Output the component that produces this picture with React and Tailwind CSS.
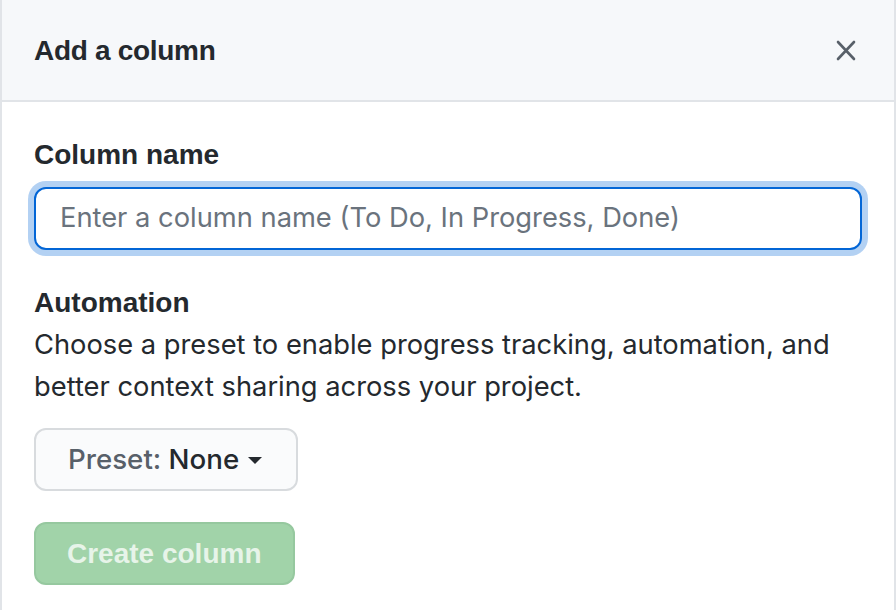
export default function App() {
  return (
    <div className="w-[896px] h-[610px] overflow-hidden bg-white font-['Liberation_Sans',Arial,sans-serif] text-[#24292e]">
      <div className="h-full border-x-2 border-[#e1e4e8]">
        <div className="h-[102px] bg-[#f6f8fa] border-b-2 border-[#e1e4e8] flex items-center justify-between pl-[32px] pr-[36px]">
          <h2 className="text-[28px] leading-[42px] font-bold tracking-[-0.3px] pt-[2px]">Add a column</h2>
          <svg width="24" height="24" viewBox="0 0 24 24" className="mt-[1px]">
            <path d="M4 3 L20 20 M20 3 L4 20" stroke="#586069" strokeWidth="2.6" strokeLinecap="round" fill="none" />
          </svg>
        </div>
        <div className="pl-[32px] pr-[32px] pt-[32px]">
          <div className="text-[28px] leading-[42px] font-bold">Column name</div>
          <div className="mt-[11px] w-[828px] h-[63px] rounded-[12px] border-2 border-[#0366d6] shadow-[0_0_0_6px_rgba(3,102,214,0.3)] flex items-center pl-[24px] text-[27.3px] text-[#6a737d] bg-white font-['Inter',sans-serif]">
            Enter a column name (To Do, In Progress, Done)
          </div>
          <div className="mt-[32px] text-[28px] leading-[42px] font-bold">Automation</div>
          <p className="text-[27.3px] leading-[42px] font-['Inter',sans-serif]">
            Choose a preset to enable progress tracking, automation, and<br />
            better context sharing across your project.
          </p>
          <div className="mt-[20px] flex">
            <div className="h-[63px] flex items-center pl-[32px] pr-[33px] rounded-[12px] border-2 border-[#d8dbde] bg-[#fafbfc] text-[27.7px] font-['Inter',sans-serif] font-medium">
              <span className="text-[#586069]">Preset:&nbsp;</span>
              <span className="text-[#24292e]">None</span>
              <svg width="16" height="10" viewBox="0 0 16 10" className="ml-[8px] mt-[2px]">
                <path d="M1 1 L15 1 L8 8 Z" fill="#24292e" />
              </svg>
            </div>
          </div>
          <div className="mt-[31px] flex">
            <div className="h-[63px] flex items-center px-[31px] rounded-[12px] border-2 border-[#96c89f] bg-[#a1d3a9] text-[28px] font-bold text-white/75">
              Create column
            </div>
          </div>
        </div>
      </div>
    </div>
  );
}
